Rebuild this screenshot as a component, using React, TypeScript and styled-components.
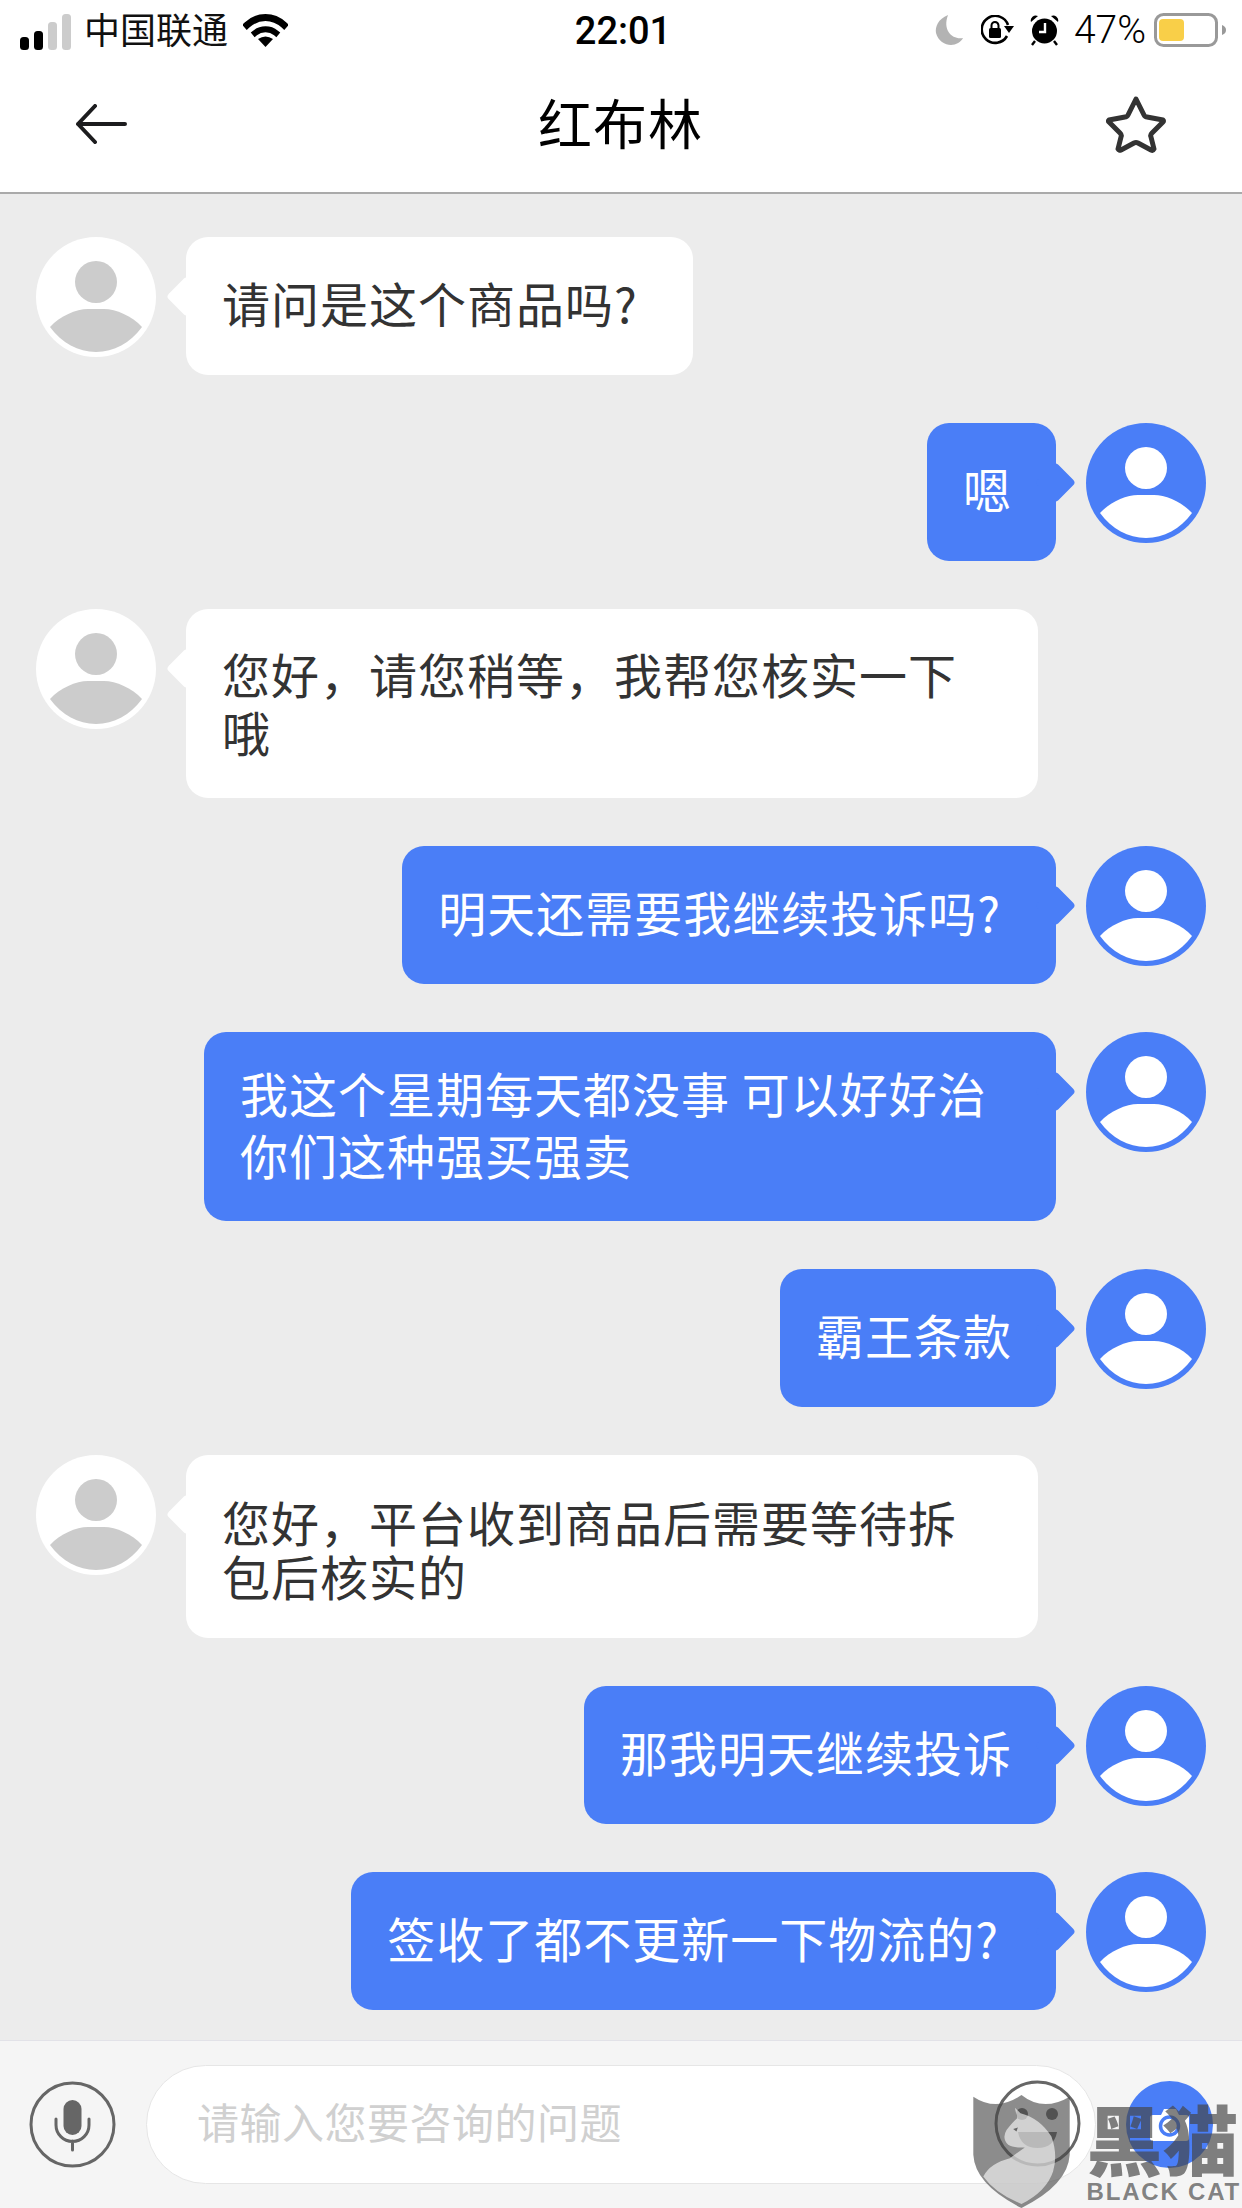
// Third-part imports
import React from 'react';
import styled, { createGlobalStyle } from 'styled-components';

const BLUE = '#4a7ef7';
const CJK = `"Noto Sans CJK SC", "Noto Sans", sans-serif`;

const GlobalStyle = createGlobalStyle`
  html, body {
    margin: 0;
    padding: 0;
    background: #ececec;
  }
  * {
    box-sizing: border-box;
  }
`;

const Page = styled.div`
  width: 1242px;
  height: 2208px;
  display: flex;
  flex-direction: column;
  background: #ececec;
  font-family: ${CJK};
  overflow: hidden;
`;

const Header = styled.header`
  background: #fff;
  height: 194px;
  border-bottom: 2px solid #aaa;
  flex-shrink: 0;
`;

const StatusBar = styled.div`
  height: 60px;
  display: grid;
  grid-template-columns: 1fr auto 1fr;
  align-items: center;
  padding: 0 16px 0 20px;
`;

const StatusLeft = styled.div`
  display: flex;
  align-items: center;
`;

const StatusRight = styled.div`
  display: flex;
  align-items: center;
  justify-content: flex-end;
`;

const Carrier = styled.span`
  font-size: 36px;
  line-height: 40px;
  color: #111;
  margin: -4px 15px 0 13px;
`;

const Time = styled.span`
  font-family: Roboto, "Liberation Sans", sans-serif;
  font-weight: 500;
  font-size: 38px;
  color: #000;
  margin-top: 2px;
`;

const Percent = styled.span`
  font-family: Roboto, "Liberation Sans", sans-serif;
  font-weight: 300;
  font-size: 39px;
  color: #000;
  margin: 0 8px 0 15px;
`;

const StatusIcon = styled.svg<{ $gap?: number }>`
  display: block;
  margin-left: ${(p) => p.$gap ?? 0}px;
`;

const NavBar = styled.nav`
  height: 128px;
  display: grid;
  grid-template-columns: 1fr auto 1fr;
  align-items: center;
  padding: 0 76px 0 75px;
`;

const Title = styled.h1`
  margin: -4px 0 0;
  font-size: 54px;
  line-height: 60px;
  font-weight: 400;
  letter-spacing: 1px;
  color: #000;
`;

const NavEnd = styled.div`
  display: flex;
  justify-content: flex-end;
`;

const Messages = styled.main`
  flex: 1;
  display: flex;
  flex-direction: column;
  gap: 48px;
  padding-top: 43px;
`;

const Row = styled.div<{ $mine?: boolean }>`
  display: flex;
  align-items: flex-start;
  gap: 30px;
  padding: 0 36px;
  justify-content: ${(p) => (p.$mine ? 'flex-end' : 'flex-start')};
`;

const Bubble = styled.div<{
  $mine?: boolean;
  $lineHeight: number;
  $top: number;
  $bottom: number;
  $right: number;
}>`
  position: relative;
  max-width: 852px;
  padding: ${(p) => p.$top}px ${(p) => p.$right}px ${(p) => p.$bottom}px 36px;
  border-radius: 22px;
  font-size: 48px;
  letter-spacing: 1px;
  line-height: ${(p) => p.$lineHeight}px;
  color: ${(p) => (p.$mine ? '#fff' : '#333')};
  background: ${(p) => (p.$mine ? BLUE : '#fff')};

  &::before {
    content: '';
    position: absolute;
    top: 45px;
    width: 29px;
    height: 29px;
    border-radius: 4px;
    transform: rotate(45deg);
    background: inherit;
    ${(p) => (p.$mine ? 'right: -14px;' : 'left: -14px;')}
  }
`;

const AvatarIcon = styled.svg`
  display: block;
  flex-shrink: 0;
  width: 120px;
  height: 120px;
`;

const Footer = styled.footer`
  position: relative;
  height: 168px;
  flex-shrink: 0;
  display: flex;
  align-items: flex-start;
  gap: 30px;
  padding: 24px 29px 0;
  background: #f5f5f5;
  border-top: 1px solid #e2e2e8;
`;

const RoundButton = styled.svg`
  display: block;
  flex-shrink: 0;
  width: 87px;
  height: 87px;
  margin-top: 16px;
`;

const EmojiButton = styled(RoundButton)`
  position: absolute;
  top: 23px;
  right: 161px;
`;

const Input = styled.input`
  flex: 1;
  min-width: 0;
  height: 119px;
  padding: 0 0 8px 50px;
  border: 1px solid #e6e6e6;
  border-radius: 60px;
  background: #fff;
  font-family: ${CJK};
  font-size: 42px;
  letter-spacing: 0.5px;
  outline: none;

  &::placeholder {
    color: #d0d0d0;
    opacity: 1;
  }
`;

const Watermark = styled.div`
  position: absolute;
  right: 1px;
  bottom: 0;
  display: flex;
  align-items: flex-start;
  gap: 17px;
`;

const WatermarkWords = styled.div`
  display: flex;
  flex-direction: column;
  align-items: stretch;
  color: rgba(70, 70, 70, 0.68);
`;

const WatermarkName = styled.div`
  font-family: "Noto Sans CJK SC", sans-serif;
  font-weight: 900;
  font-size: 76px;
  line-height: 84px;
  white-space: nowrap;
`;

const WatermarkLatin = styled.div`
  font-family: "Liberation Sans", sans-serif;
  font-weight: 700;
  font-size: 24px;
  line-height: 26px;
  letter-spacing: 1.8px;
  white-space: nowrap;
`;

const Avatar = ({ mine }: { mine?: boolean }) => (
  <AvatarIcon viewBox="0 0 120 120">
    <circle cx="60" cy="60" r="60" fill={mine ? BLUE : '#fff'} />
    <circle cx="60" cy="45" r="21" fill={mine ? '#fff' : '#ccc'} />
    <path
      d="M14 90C24 79 40 72 52 72L68 72C80 72 96 79 106 90C94 106 78 115 60 115C42 115 26 106 14 90Z"
      fill={mine ? '#fff' : '#ccc'}
    />
  </AvatarIcon>
);

const messages = [
  { text: '请问是这个商品吗?', lineHeight: 60, top: 35, bottom: 43, right: 55 },
  { text: '嗯', mine: true, lineHeight: 60, top: 35, bottom: 43, right: 44 },
  { text: '您好，请您稍等，我帮您核实一下哦', lineHeight: 58, top: 35, bottom: 38, right: 44 },
  { text: '明天还需要我继续投诉吗?', mine: true, lineHeight: 60, top: 35, bottom: 43, right: 55 },
  { text: '我这个星期每天都没事 可以好好治你们这种强买强卖', mine: true, lineHeight: 62, top: 29, bottom: 36, right: 44 },
  { text: '霸王条款', mine: true, lineHeight: 60, top: 35, bottom: 43, right: 44 },
  { text: '您好，平台收到商品后需要等待拆包后核实的', lineHeight: 54, top: 39, bottom: 36, right: 44 },
  { text: '那我明天继续投诉', mine: true, lineHeight: 60, top: 35, bottom: 43, right: 44 },
  { text: '签收了都不更新一下物流的?', mine: true, lineHeight: 60, top: 35, bottom: 43, right: 57 },
];

export default function App() {
  return (
    <Page>
      <GlobalStyle />
      <Header>
        <StatusBar>
          <StatusLeft>
            <StatusIcon width="51" height="40" viewBox="0 0 51 40">
              <rect x="0" y="27" width="9" height="13" rx="3.5" fill="#000" />
              <rect x="14" y="21" width="9" height="19" rx="3.5" fill="#000" />
              <rect x="28" y="12" width="9" height="28" rx="3.5" fill="#ccc" />
              <rect x="42" y="4" width="9" height="36" rx="3.5" fill="#ccc" />
            </StatusIcon>
            <Carrier>中国联通</Carrier>
            <StatusIcon width="45" height="34" viewBox="0 0 45 34">
              <path d="M4 12C15 2 30 2 41 12" fill="none" stroke="#000" strokeWidth="7" strokeLinecap="square" />
              <path d="M12 20C18 15 27 15 33 20" fill="none" stroke="#000" strokeWidth="6" strokeLinecap="square" />
              <path d="M15 26Q22.5 21 30 26L22.5 34Z" fill="#000" />
            </StatusIcon>
          </StatusLeft>
          <Time>22:01</Time>
          <StatusRight>
            <StatusIcon width="30" height="30" viewBox="0 0 28 30">
              <path d="M13 0C3 4 0 12 1 18C3 26 10 30 16 30C21 30 26 27 28 23C18 25 7 16 13 0Z" fill="#b3b3b3" />
            </StatusIcon>
            <StatusIcon $gap={17} width="33" height="30" viewBox="0 0 33 30">
              <path d="M26 21A13.5 13.5 0 1 1 27 10" fill="none" stroke="#000" strokeWidth="2.6" />
              <path d="M23 11H33L28 18Z" fill="#000" />
              <rect x="8" y="13" width="12" height="10" rx="1.5" fill="#000" />
              <path d="M10.5 13V10.5A3.5 3.5 0 0 1 17.5 10.5V13" fill="none" stroke="#000" strokeWidth="2" />
            </StatusIcon>
            <StatusIcon $gap={16} width="29" height="32" viewBox="0 0 29 32">
              <circle cx="14.5" cy="17" r="12.5" fill="#000" />
              <path d="M1 8A5 5 0 0 1 8 2ZM28 8A5 5 0 0 0 21 2Z" fill="#000" />
              <path d="M5 27L2 31M24 27L27 31" stroke="#000" strokeWidth="2.4" />
              <path d="M15 9V18H9" fill="none" stroke="#fff" strokeWidth="2.4" />
            </StatusIcon>
            <Percent>47%</Percent>
            <StatusIcon width="72" height="34" viewBox="0 0 72 34">
              <rect x="1.5" y="1.5" width="61" height="31" rx="8" fill="none" stroke="#999" strokeWidth="3" />
              <rect x="5" y="6" width="25" height="22" rx="4" fill="#f9cf48" />
              <path d="M68 12C71 13 72 15 72 17C72 19 71 21 68 22Z" fill="#999" />
            </StatusIcon>
          </StatusRight>
        </StatusBar>
        <NavBar>
          <svg width="52" height="40" viewBox="0 0 52 40" fill="none" stroke="#1c1c1e" strokeWidth="4" strokeLinecap="round" strokeLinejoin="round">
            <path d="M50 20H3M20 2L3 20L20 38" />
          </svg>
          <Title>红布林</Title>
          <NavEnd>
            <svg width="60" height="57" viewBox="0 0 60 57" fill="none" stroke="#333" strokeWidth="5" strokeLinejoin="round">
              <path d="M30 3L38 19Q39 21 41 21L57 24Q58 25 57 26L46 37Q44 39 45 41L48 53Q47 55 45 54L32 47Q30 46 28 47L15 54Q13 55 12 53L15 41Q16 39 14 37L3 26Q2 25 3 24L19 21Q21 21 22 19Z" />
            </svg>
          </NavEnd>
        </NavBar>
      </Header>
      <Messages>
        {messages.map(({ text, mine, lineHeight, top, bottom, right }) => (
          <Row key={text} $mine={mine}>
            {!mine && <Avatar />}
            <Bubble $mine={mine} $lineHeight={lineHeight} $top={top} $bottom={bottom} $right={right}>
              {text}
            </Bubble>
            {mine && <Avatar mine />}
          </Row>
        ))}
      </Messages>
      <Footer>
        <RoundButton viewBox="0 0 87 87">
          <circle cx="43.5" cy="43.5" r="41.5" fill="none" stroke="#666" strokeWidth="3" />
          <rect x="34.5" y="19" width="18" height="35" rx="9" fill="#666" />
          <path d="M27 38V44A16.5 16.5 0 0 0 60 44V38M43.5 60V69" fill="none" stroke="#666" strokeWidth="3" strokeLinecap="round" />
        </RoundButton>
        <Input placeholder="请输入您要咨询的问题" readOnly />
        <RoundButton viewBox="0 0 87 87">
          <circle cx="43.5" cy="43.5" r="43.5" fill={BLUE} />
          <path d="M27 34H35L38 28H50L53 34H60Q63 34 63 37V57Q63 60 60 60H27Q24 60 24 57V37Q24 34 27 34Z" fill="#fff" />
          <circle cx="43.5" cy="45" r="9" fill="none" stroke={BLUE} strokeWidth="3.5" />
        </RoundButton>
        <EmojiButton viewBox="0 0 87 87">
          <circle cx="43.5" cy="43.5" r="41.5" fill="none" stroke="#666" strokeWidth="3" />
          <circle cx="28" cy="34" r="6" fill="#666" />
          <circle cx="58" cy="34" r="6" fill="#666" />
          <path d="M24 52H63Q60 68 43.5 68Q27 68 24 52Z" fill="#666" />
        </EmojiButton>
        <Watermark>
          <svg width="97" height="113" viewBox="220 220 290 340">
            <path
              d="M220 225Q290 272 365 220Q430 272 510 225L510 400Q505 490 365 560Q225 490 220 400Z"
              fill="rgba(70,70,70,0.62)"
            />
            <path
              d="M345 258L362 275Q420 290 455 345Q475 400 460 450Q440 510 365 548Q285 515 250 465Q270 425 330 410L375 378Q340 380 325 370Q305 350 320 325Q340 300 352 290Z"
              fill="rgba(255,255,255,0.6)"
            />
            <path d="M340 322L354 318L350 330Z" fill="#666" />
          </svg>
          <WatermarkWords>
            <WatermarkName>黑猫</WatermarkName>
            <WatermarkLatin>BLACK CAT</WatermarkLatin>
          </WatermarkWords>
        </Watermark>
      </Footer>
    </Page>
  );
}
